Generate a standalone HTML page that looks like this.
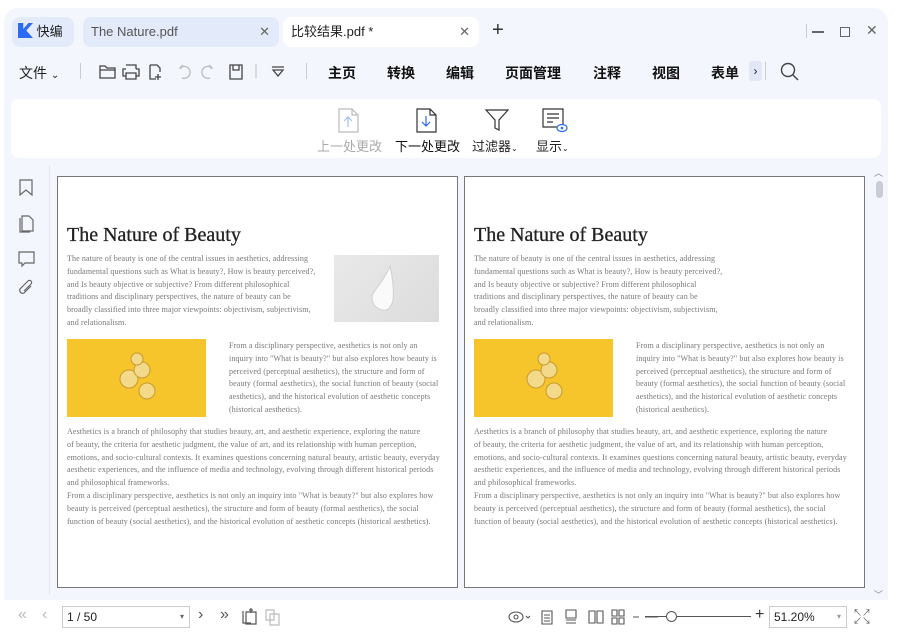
<!DOCTYPE html>
<html><head><meta charset="utf-8"><style>
*{margin:0;padding:0;box-sizing:border-box}
body{width:897px;height:636px;background:#fff;font-family:"Liberation Sans","Noto Sans CJK SC",sans-serif;position:relative;overflow:hidden;color:#222}
.win{position:absolute;left:4px;top:8px;width:884px;height:628px;background:#f3f6fc;border-radius:14px 14px 0 0}
.a{position:absolute}
.tab{position:absolute;top:17px;height:30px;border-radius:8px;font-size:13px;line-height:30px;padding-left:8px}
.menu{position:absolute;top:63px;font-size:14px;font-weight:bold;color:#111}
.ic{position:absolute}
.page{position:absolute;top:176px;width:401px;height:412px;background:#fff;border:1px solid #777}
.page .t{position:absolute;left:9px;top:47px;font-family:"Liberation Serif",serif;font-size:20px;color:#222;-webkit-text-stroke:0.3px #222}
.p{position:absolute;font-family:"Liberation Serif",serif;font-size:8px;letter-spacing:0.12px;line-height:12.8px;color:#777;white-space:nowrap}
.bot{position:absolute;top:604px}
</style></head><body>
<div class="win"></div>
<div class="tab" style="left:12px;width:62px;background:#e3eafa;padding-left:6px"><span style="display:inline-block;width:15px;height:15px;vertical-align:-2px;background:#2b6bf3;clip-path:polygon(0 0,35% 0,35% 40%,70% 0,100% 0,55% 50%,100% 100%,0 100%);"></span> 快编</div>
<div class="tab" style="left:83px;width:196px;background:#e3eafa;color:#555">The Nature.pdf<span style="position:absolute;right:9px;color:#666">✕</span></div>
<div class="tab" style="left:283px;width:196px;background:#fff;color:#222">比较结果.pdf *<span style="position:absolute;right:9px;color:#666">✕</span></div>
<div class="a" style="left:492px;top:19px;font-size:20px;color:#333">+</div>
<div class="a" style="left:806px;top:24px;width:1px;height:14px;background:#ccc"></div>
<div class="a" style="left:812px;top:31px;width:12px;height:1.5px;background:#666"></div>
<div class="a" style="left:840px;top:27px;width:10px;height:10px;border:1.3px solid #666"></div>
<div class="a" style="left:866px;top:22px;font-size:14px;color:#666">✕</div>
<div class="a" style="left:19px;top:63px;font-size:14px">文件 <span style="font-size:10px">⌄</span></div>
<div class="a" style="left:80px;top:63px;width:1px;height:16px;background:#ccc"></div>
<svg class="ic" style="left:98px;top:62px" width="200" height="20" fill="none" stroke="#444" stroke-width="1.3">
<path d="M2 4h5l2 2h8v10H2z M2 8h15"/>
<path d="M28 3h10v4M28 7h-3v7h3M38 7h3v7h-3M28 11h10v6H28z"/>
<path d="M52 3h7l3 3v4M52 3v14h6M60 12v6M57 15h6"/>
<path d="M84 6h-2l3-3M82 6a6 6 0 1 1 2 10" stroke="#bbb"/>
<path d="M112 6h2l-3-3M114 6a6 6 0 1 0-2 10" stroke="#bbb"/>
<path d="M132 3h12v14h-12zM135 3v5h6V3"/>
<path d="M158 2v14" stroke="#ccc"/>
<path d="M174 5h12M175 8l5 6 5-6z"/>
</svg>
<div class="a" style="left:306px;top:63px;width:1px;height:16px;background:#ccc"></div>
<div class="menu" style="left:328px">主页</div>
<div class="menu" style="left:387px">转换</div>
<div class="menu" style="left:446px">编辑</div>
<div class="menu" style="left:505px">页面管理</div>
<div class="menu" style="left:593px">注释</div>
<div class="menu" style="left:652px">视图</div>
<div class="menu" style="left:711px">表单</div>
<div class="a" style="left:749px;top:61px;width:13px;height:20px;background:#e1e7f5;border-radius:3px;font-size:12px;text-align:center;line-height:20px">›</div>
<div class="a" style="left:765px;top:62px;width:1px;height:18px;background:#ccc"></div>
<svg class="ic" style="left:780px;top:62px" width="20" height="20" fill="none" stroke="#444" stroke-width="1.4"><circle cx="8" cy="8" r="6.5"/><path d="M13 13l5 5"/></svg>
<div class="a" style="left:11px;top:99px;width:870px;height:59px;background:#fff;border-radius:8px"></div>
<svg class="ic" style="left:337px;top:108px" width="240" height="26" fill="none" stroke-width="1.2">
<path d="M2 1h13l6 6v17H2z M15 1v6h6" stroke="#bbb"/><path d="M11 19V9M7 13l4-4 4 4" stroke="#9cc3f0"/>
<path d="M80 1h13l6 6v17H80z M93 1v6h6" stroke="#333"/><path d="M89 8v10M85 14l4 4 4-4" stroke="#2b6bf3"/>
<path d="M149 2h22l-9 10v10l-4-2v-8z" stroke="#333"/>
<path d="M206 1h20v18h-20z M210 6h12M210 10h12M210 14h6" stroke="#333"/><ellipse cx="225" cy="20" rx="5" ry="3.5" stroke="#2b6bf3" fill="#fff"/><circle cx="225" cy="20" r="1.3" fill="#2b6bf3" stroke="none"/>
</svg>
<div class="a" style="left:317px;top:136px;font-size:13px;color:#aaa">上一处更改</div>
<div class="a" style="left:395px;top:136px;font-size:13px;color:#111">下一处更改</div>
<div class="a" style="left:472px;top:136px;font-size:13px;color:#222">过滤器<span style="font-size:8px">⌄</span></div>
<div class="a" style="left:536px;top:136px;font-size:13px;color:#222">显示<span style="font-size:8px">⌄</span></div>
<div class="a" style="left:49px;top:165px;width:1px;height:430px;background:#e3e6ee"></div>
<svg class="ic" style="left:16px;top:178px" width="22" height="125" fill="none" stroke="#666" stroke-width="1.2">
<path d="M4 2h12v15l-6-5-6 5z"/>
<path d="M6 38h7l4 4v11H6z M4 40v14h10"/>
<path d="M3 74h15v11H9l-3 3v-3H3z"/>
<path d="M15 108l-7 7a3 3 0 0 1-4-4l8-8a2 2 0 0 1 3 3l-7 7"/>
</svg>
<div class="a" style="left:874px;top:166px;font-size:9px;color:#888">︿</div>
<div class="a" style="left:876px;top:181px;width:7px;height:17px;background:#c8ccd4;border-radius:4px"></div>
<div class="a" style="left:874px;top:588px;font-size:9px;color:#888">﹀</div>
<div class="page" style="left:57px">
<div class="t">The Nature of Beauty</div>
<div class="p" style="left:9px;top:76px">The nature of beauty is one of the central issues in aesthetics, addressing<br>fundamental questions such as What is beauty?, How is beauty perceived?,<br>and Is beauty objective or subjective? From different philosophical<br>traditions and disciplinary perspectives, the nature of beauty can be<br>broadly classified into three major viewpoints: objectivism, subjectivism,<br>and relationalism.</div>
<div class="a" style="left:276px;top:78px;width:105px;height:67px;background:linear-gradient(135deg,#e9e9e9,#dcdcdc)"><svg width="105" height="67"><path d="M48 55c-10-3-12-12-8-18 4-6 10-12 16-26 3 12 4 26 3 34-2 8-5 11-11 10z" fill="#fafafa" stroke="#d0d0d0"/></svg></div>
<div class="a" style="left:9px;top:162px;width:139px;height:78px;background:#f6c42b"><svg width="139" height="78"><circle cx="62" cy="40" r="9" fill="#f3d98a" stroke="#c89a30"/><circle cx="75" cy="31" r="8" fill="#f3d98a" stroke="#c89a30"/><circle cx="80" cy="52" r="8" fill="#f3d98a" stroke="#c89a30"/><circle cx="70" cy="20" r="6" fill="#f3d98a" stroke="#c89a30"/></svg></div>
<div class="p" style="left:171px;top:163px">From a disciplinary perspective, aesthetics is not only an<br>inquiry into "What is beauty?" but also explores how beauty is<br>perceived (perceptual aesthetics), the structure and form of<br>beauty (formal aesthetics), the social function of beauty (social<br>aesthetics), and the historical evolution of aesthetic concepts<br>(historical aesthetics).</div>
<div class="p" style="left:9px;top:249px">Aesthetics is a branch of philosophy that studies beauty, art, and aesthetic experience, exploring the nature<br>of beauty, the criteria for aesthetic judgment, the value of art, and its relationship with human perception,<br>emotions, and socio-cultural contexts. It examines questions concerning natural beauty, artistic beauty, everyday<br>aesthetic experiences, and the influence of media and technology, evolving through different historical periods<br>and philosophical frameworks.<br>From a disciplinary perspective, aesthetics is not only an inquiry into "What is beauty?" but also explores how<br>beauty is perceived (perceptual aesthetics), the structure and form of beauty (formal aesthetics), the social<br>function of beauty (social aesthetics), and the historical evolution of aesthetic concepts (historical aesthetics).</div>
</div>
<div class="page" style="left:464px">
<div class="t">The Nature of Beauty</div>
<div class="p" style="left:9px;top:76px">The nature of beauty is one of the central issues in aesthetics, addressing<br>fundamental questions such as What is beauty?, How is beauty perceived?,<br>and Is beauty objective or subjective? From different philosophical<br>traditions and disciplinary perspectives, the nature of beauty can be<br>broadly classified into three major viewpoints: objectivism, subjectivism,<br>and relationalism.</div>
<div class="a" style="left:9px;top:162px;width:139px;height:78px;background:#f6c42b"><svg width="139" height="78"><circle cx="62" cy="40" r="9" fill="#f3d98a" stroke="#c89a30"/><circle cx="75" cy="31" r="8" fill="#f3d98a" stroke="#c89a30"/><circle cx="80" cy="52" r="8" fill="#f3d98a" stroke="#c89a30"/><circle cx="70" cy="20" r="6" fill="#f3d98a" stroke="#c89a30"/></svg></div>
<div class="p" style="left:171px;top:163px">From a disciplinary perspective, aesthetics is not only an<br>inquiry into "What is beauty?" but also explores how beauty is<br>perceived (perceptual aesthetics), the structure and form of<br>beauty (formal aesthetics), the social function of beauty (social<br>aesthetics), and the historical evolution of aesthetic concepts<br>(historical aesthetics).</div>
<div class="p" style="left:9px;top:249px">Aesthetics is a branch of philosophy that studies beauty, art, and aesthetic experience, exploring the nature<br>of beauty, the criteria for aesthetic judgment, the value of art, and its relationship with human perception,<br>emotions, and socio-cultural contexts. It examines questions concerning natural beauty, artistic beauty, everyday<br>aesthetic experiences, and the influence of media and technology, evolving through different historical periods<br>and philosophical frameworks.<br>From a disciplinary perspective, aesthetics is not only an inquiry into "What is beauty?" but also explores how<br>beauty is perceived (perceptual aesthetics), the structure and form of beauty (formal aesthetics), the social<br>function of beauty (social aesthetics), and the historical evolution of aesthetic concepts (historical aesthetics).</div>
</div>
<div class="a" style="left:4px;top:600px;width:884px;height:36px;background:#fff"></div>
<div class="bot" style="left:18px;font-size:16px;color:#bbb;top:606px">«</div>
<div class="bot" style="left:42px;font-size:16px;color:#bbb;top:606px">‹</div>
<div class="a" style="left:62px;top:606px;width:128px;height:22px;border:1px solid #ccc;font-size:12px;line-height:20px;padding-left:4px;background:#fff">1 / 50<span style="position:absolute;right:5px;font-size:8px;color:#666">▾</span></div>
<div class="bot" style="left:198px;font-size:16px;color:#555;top:606px">›</div>
<div class="bot" style="left:220px;font-size:16px;color:#555;top:606px">»</div>
<svg class="ic" style="left:240px;top:607px" width="45" height="20" fill="none" stroke="#555" stroke-width="1.2"><path d="M3 4v12h8M6 5h10v12H6zM11 1v5M9 3h4"/><path d="M26 3h8v10h-8z M30 7h9v11h-9z" stroke="#bbb"/></svg>
<svg class="ic" style="left:508px;top:608px" width="150" height="18" fill="none" stroke="#555" stroke-width="1.1">
<ellipse cx="8" cy="9" rx="7" ry="5"/><circle cx="8" cy="9" r="2"/><path d="M18 8l2 2 2-2"/>
<path d="M34 3h10v13H34zM36 7h6M36 10h6M36 13h6"/>
<path d="M58 2h10v8H58zM58 12h10M58 15h10"/>
<path d="M81 3h6v12h-6zM89 3h6v12h-6z"/>
<path d="M104 2h5v6h-5zM111 2h5v6h-5zM104 10h5v6h-5zM111 10h5v6h-5z"/>
<path d="M125 9h6M137 9h110"/>
</svg>
<div class="a" style="left:645px;top:616px;width:106px;height:1px;background:#555"></div>
<div class="a" style="left:666px;top:611px;width:11px;height:11px;border:1px solid #555;border-radius:50%;background:#fff"></div>
<div class="a" style="left:755px;top:606px;font-size:16px;color:#333">+</div>
<div class="a" style="left:769px;top:606px;width:78px;height:22px;border:1px solid #ccc;font-size:12px;line-height:20px;padding-left:4px;background:#fff">51.20%<span style="position:absolute;right:5px;font-size:8px;color:#999">▾</span></div>
<div class="a" style="left:853px;top:609px;font-size:9px;color:#555;line-height:8px">↖↗<br>↙↘</div>
</body></html>
